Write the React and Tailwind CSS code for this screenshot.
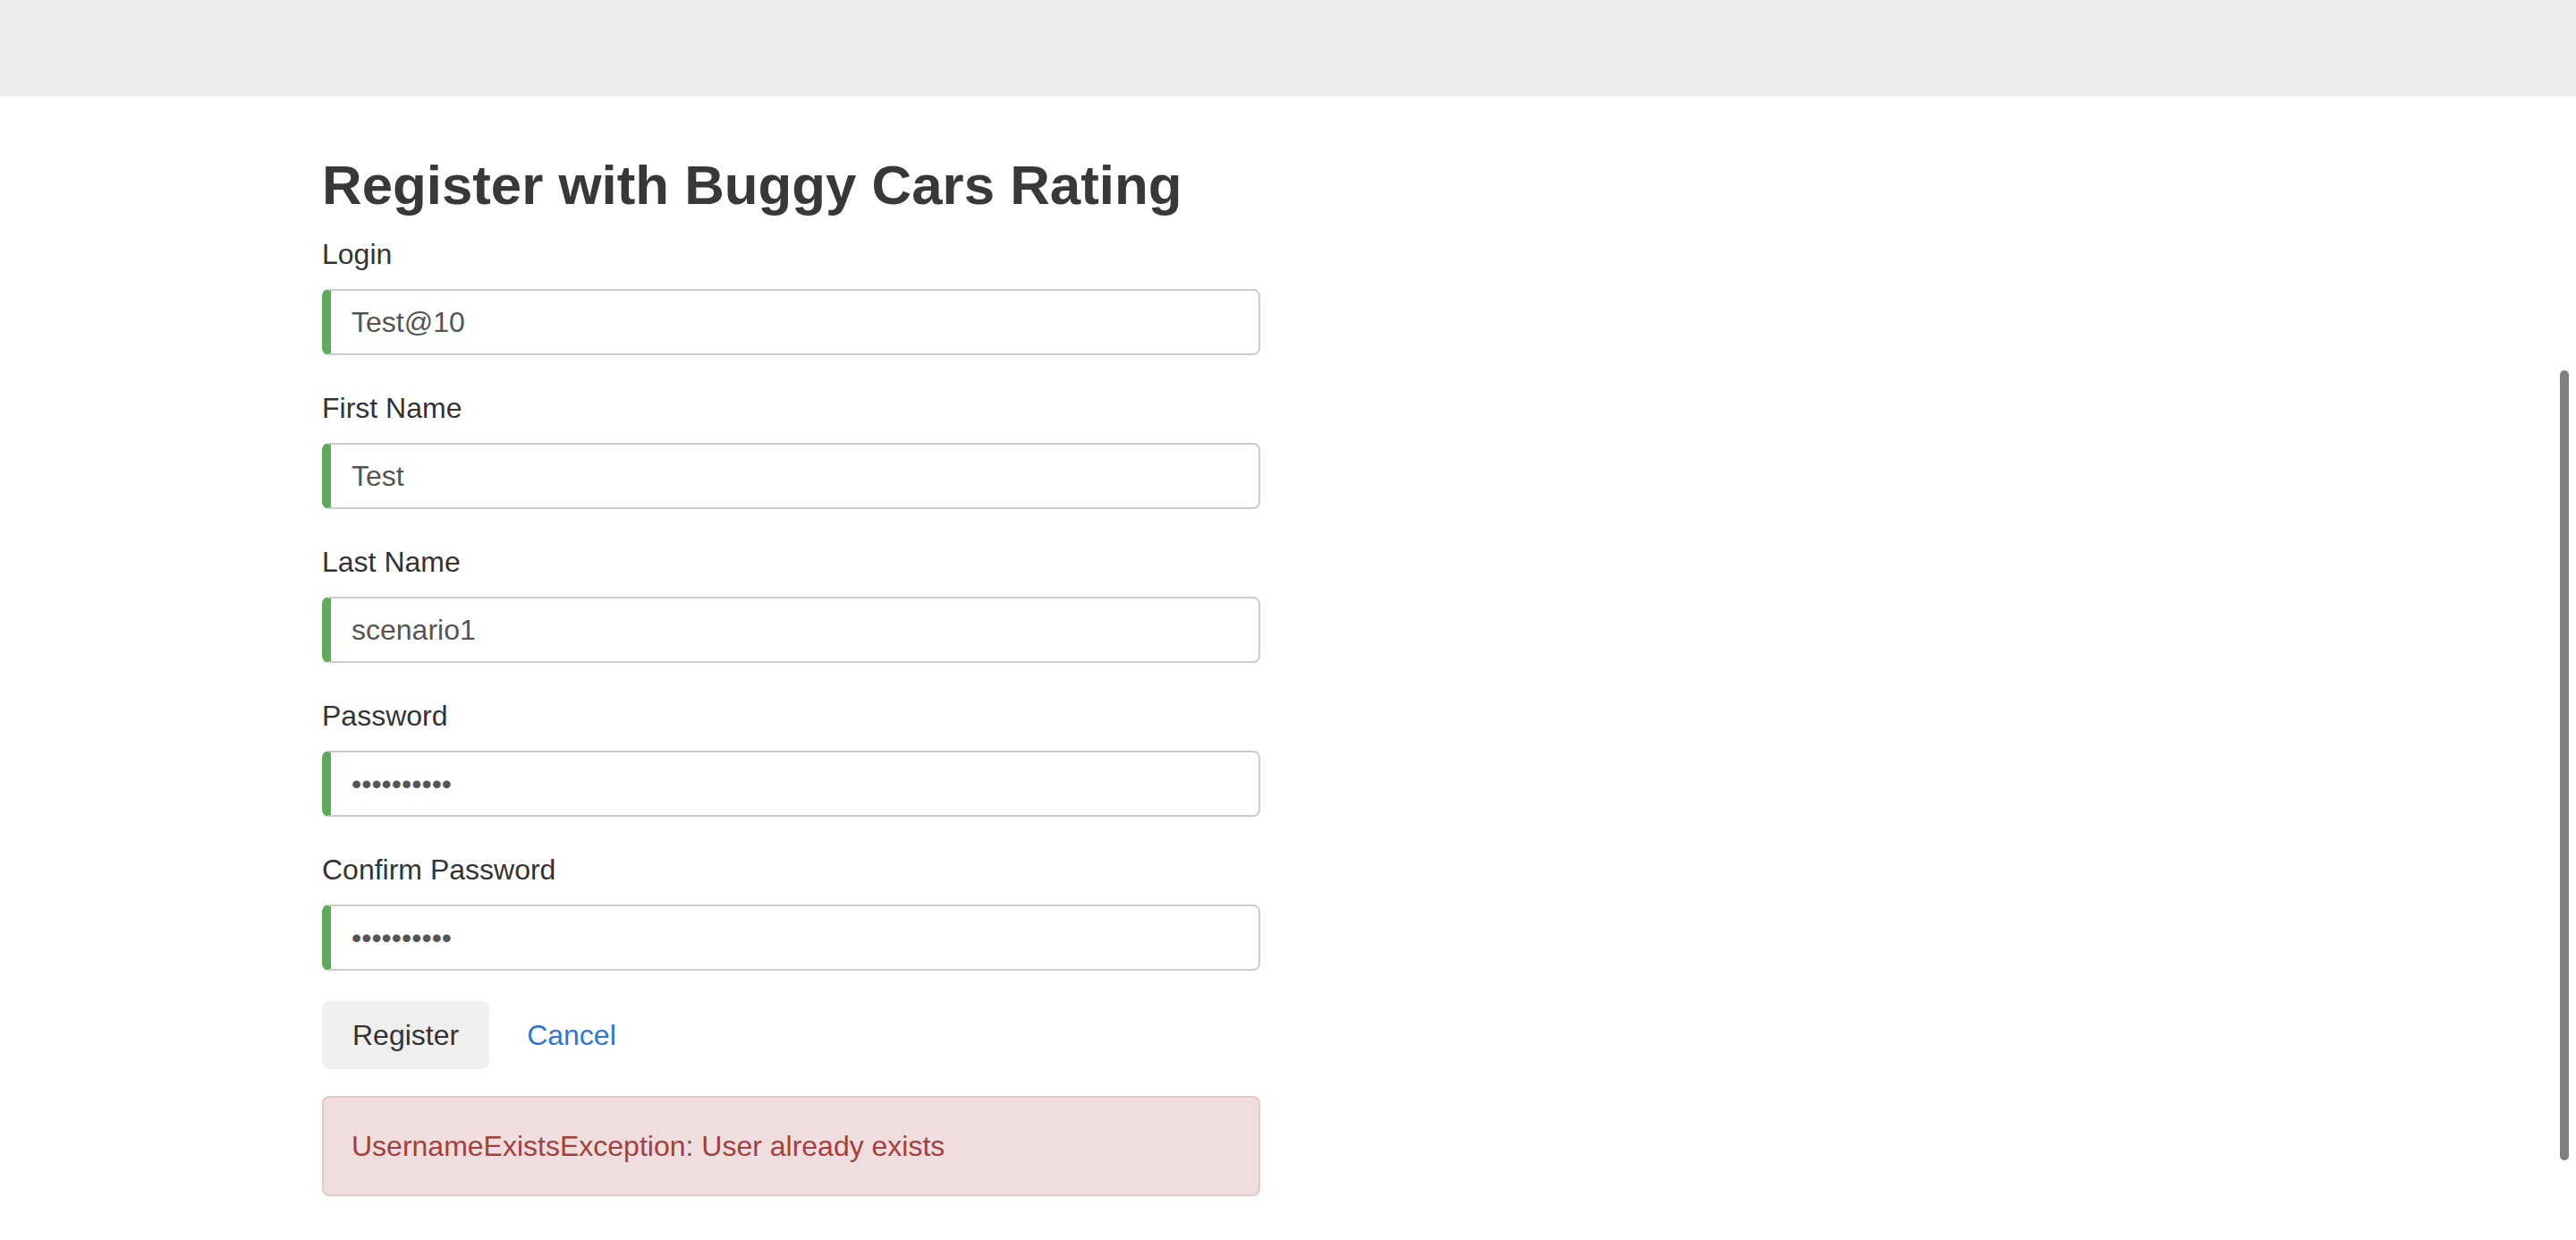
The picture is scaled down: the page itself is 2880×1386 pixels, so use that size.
import React from 'react';

const fields = [
  { label: 'Login', value: 'Test@10', type: 'text' },
  { label: 'First Name', value: 'Test', type: 'text' },
  { label: 'Last Name', value: 'scenario1', type: 'text' },
  { label: 'Password', value: 'Test@12345', type: 'password' },
  { label: 'Confirm Password', value: 'Test@12345', type: 'password' },
];

export default function App() {
  return (
    <div className="relative h-screen overflow-hidden bg-white font-['Liberation_Sans',Arial,sans-serif]">
      <div className="h-[108px] bg-[#ecedef]" />

      <div className="pl-[360px] pt-[65px]">
        <h1 className="text-[61.8px] leading-[68px] font-bold text-[#383838]">
          Register with Buggy Cars Rating
        </h1>

        <form className="w-[1049px] mt-[20px]" onSubmit={(e) => e.preventDefault()}>
          <div className="flex flex-col gap-[36px]">
            {fields.map((f) => (
              <div key={f.label}>
                <label className="block text-[32px] leading-[46px] mb-[16px] text-[#333]">
                  {f.label}
                </label>
                <input
                  type={f.type}
                  defaultValue={f.value}
                  readOnly
                  className="block w-full h-[74px] border-2 border-[#cccccc] border-l-[10px] border-l-[#5cab5a] rounded-[8px] pl-[23px] text-[32px] text-[#555] outline-none font-['Liberation_Sans',Arial,sans-serif]"
                />
              </div>
            ))}
          </div>

          <div className="flex items-center mt-[34px]">
            <button
              type="submit"
              className="h-[76px] px-[34px] rounded-[8px] bg-[#efefef] text-[32px] text-[#333]"
            >
              Register
            </button>
            <a href="#" className="ml-[42px] text-[32px] text-[#2a78d6]">
              Cancel
            </a>
          </div>

          <div className="mt-[30px] h-[112px] flex items-center px-[31px] border-2 border-[#e8c7c9] bg-[#f0dede] rounded-[8px] text-[32px] text-[#a3403e]">
            UsernameExistsException: User already exists
          </div>
        </form>
      </div>

      <div className="absolute right-[8px] top-[414px] w-[10px] h-[883px] rounded-full bg-[#808080]" />
    </div>
  );
}
